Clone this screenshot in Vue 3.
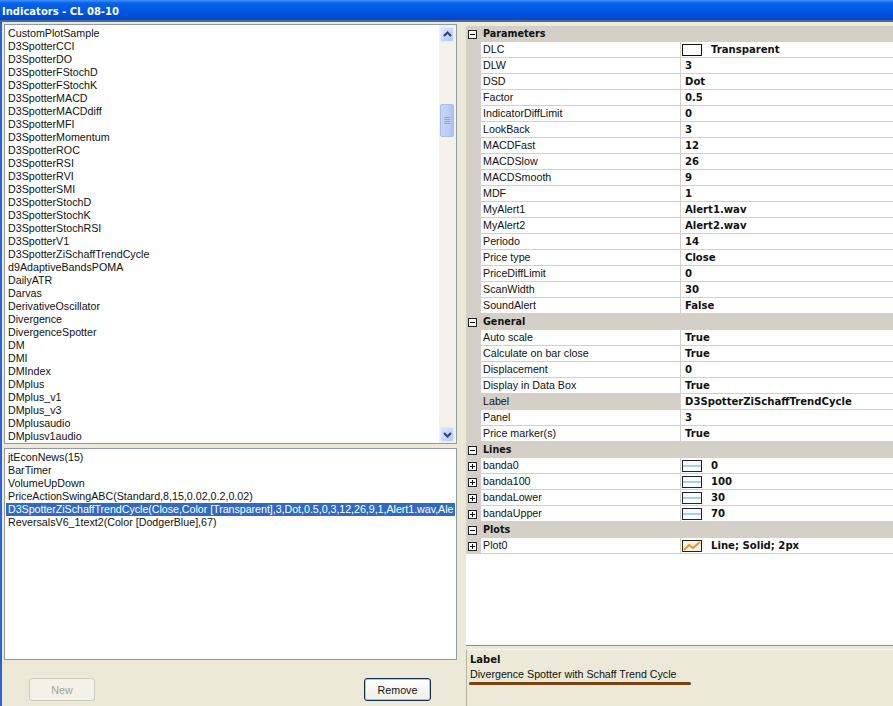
<script setup>
const indicators = [
  'CustomPlotSample', 'D3SpotterCCI', 'D3SpotterDO', 'D3SpotterFStochD', 'D3SpotterFStochK',
  'D3SpotterMACD', 'D3SpotterMACDdiff', 'D3SpotterMFI', 'D3SpotterMomentum', 'D3SpotterROC',
  'D3SpotterRSI', 'D3SpotterRVI', 'D3SpotterSMI', 'D3SpotterStochD', 'D3SpotterStochK',
  'D3SpotterStochRSI', 'D3SpotterV1', 'D3SpotterZiSchaffTrendCycle', 'd9AdaptiveBandsPOMA',
  'DailyATR', 'Darvas', 'DerivativeOscillator', 'Divergence', 'DivergenceSpotter', 'DM', 'DMI',
  'DMIndex', 'DMplus', 'DMplus_v1', 'DMplus_v3', 'DMplusaudio', 'DMplusv1audio',
]

const applied = [
  { text: 'jtEconNews(15)' },
  { text: 'BarTimer' },
  { text: 'VolumeUpDown' },
  { text: 'PriceActionSwingABC(Standard,8,15,0.02,0.2,0.02)' },
  { text: 'D3SpotterZiSchaffTrendCycle(Close,Color [Transparent],3,Dot,0.5,0,3,12,26,9,1,Alert1.wav,Ale', selected: true },
  { text: 'ReversalsV6_1text2(Color [DodgerBlue],67)' },
]

const groups = [
  {
    title: 'Parameters',
    rows: [
      { name: 'DLC', value: 'Transparent', swatch: 'empty' },
      { name: 'DLW', value: '3' },
      { name: 'DSD', value: 'Dot' },
      { name: 'Factor', value: '0.5' },
      { name: 'IndicatorDiffLimit', value: '0' },
      { name: 'LookBack', value: '3' },
      { name: 'MACDFast', value: '12' },
      { name: 'MACDSlow', value: '26' },
      { name: 'MACDSmooth', value: '9' },
      { name: 'MDF', value: '1' },
      { name: 'MyAlert1', value: 'Alert1.wav' },
      { name: 'MyAlert2', value: 'Alert2.wav' },
      { name: 'Periodo', value: '14' },
      { name: 'Price type', value: 'Close' },
      { name: 'PriceDiffLimit', value: '0' },
      { name: 'ScanWidth', value: '30' },
      { name: 'SoundAlert', value: 'False' },
    ],
  },
  {
    title: 'General',
    rows: [
      { name: 'Auto scale', value: 'True' },
      { name: 'Calculate on bar close', value: 'True' },
      { name: 'Displacement', value: '0' },
      { name: 'Display in Data Box', value: 'True' },
      { name: 'Label', value: 'D3SpotterZiSchaffTrendCycle', active: true },
      { name: 'Panel', value: '3' },
      { name: 'Price marker(s)', value: 'True' },
    ],
  },
  {
    title: 'Lines',
    rows: [
      { name: 'banda0', value: '0', swatch: 'line', expand: true },
      { name: 'banda100', value: '100', swatch: 'line', expand: true },
      { name: 'bandaLower', value: '30', swatch: 'line', expand: true },
      { name: 'bandaUpper', value: '70', swatch: 'line', expand: true },
    ],
  },
  {
    title: 'Plots',
    rows: [{ name: 'Plot0', value: 'Line; Solid; 2px', swatch: 'plot', expand: true }],
  },
]
</script>

<template>
  <div class="window">
    <header class="titlebar">Indicators - CL 08-10</header>

    <div class="body">
      <section class="left">
        <div class="listbox listbox--top">
          <ul class="items">
            <li v-for="item in indicators" :key="item">{{ item }}</li>
          </ul>
          <div class="scrollbar">
            <div class="scroll-btn">
              <svg width="9" height="7" viewBox="0 0 9 7"><path d="M1 5 L4.5 1.5 L8 5" fill="none" stroke="#2a3f8c" stroke-width="2" /></svg>
            </div>
            <div class="scroll-track">
              <div class="scroll-thumb">
                <span></span><span></span><span></span><span></span>
              </div>
            </div>
            <div class="scroll-btn">
              <svg width="9" height="7" viewBox="0 0 9 7"><path d="M1 2 L4.5 5.5 L8 2" fill="none" stroke="#2a3f8c" stroke-width="2" /></svg>
            </div>
          </div>
        </div>

        <div class="listbox listbox--applied">
          <ul class="items items--applied">
            <li v-for="item in applied" :key="item.text" :class="{ selected: item.selected }">{{ item.text }}</li>
          </ul>
        </div>

        <div class="actions">
          <button class="btn btn--disabled" disabled>New</button>
          <button class="btn btn--default">Remove</button>
        </div>
      </section>

      <section class="right">
        <div class="grid">
          <template v-for="group in groups" :key="group.title">
            <div class="group-head">
              <span class="gutter">
                <svg class="expander" width="9" height="9" viewBox="0 0 9 9"><rect x=".5" y=".5" width="8" height="8" fill="#fff" stroke="#222" /><path d="M2 4.5 H7" stroke="#111" /></svg>
              </span>
              {{ group.title }}
            </div>
            <div v-for="row in group.rows" :key="row.name" class="row">
              <span class="gutter">
                <svg v-if="row.expand" class="expander" width="9" height="9" viewBox="0 0 9 9"><rect x=".5" y=".5" width="8" height="8" fill="#fff" stroke="#222" /><path d="M2 4.5 H7 M4.5 2 V7" stroke="#111" /></svg>
              </span>
              <span class="name" :class="{ 'name--active': row.active }">{{ row.name }}</span>
              <span class="value">
                <svg v-if="row.swatch" class="swatch" width="20" height="12" viewBox="0 0 20 12">
                  <rect v-if="row.swatch === 'empty'" x=".5" y=".5" width="19" height="11" fill="#fff" stroke="#111" />
                  <template v-if="row.swatch === 'line'">
                    <rect x=".5" y=".5" width="19" height="11" fill="#f6fbfd" stroke="#223" />
                    <path d="M1 6 H19" stroke="#a9cfe0" stroke-width="2" />
                  </template>
                  <template v-if="row.swatch === 'plot'">
                    <rect x=".5" y=".5" width="19" height="11" fill="#f7f3e6" stroke="#222" />
                    <path d="M2 10 L7 5 L11 8 L18 2" fill="none" stroke="#e8962e" stroke-width="2" />
                  </template>
                </svg>
                {{ row.value }}
              </span>
            </div>
          </template>
        </div>

        <div class="help">
          <div class="help__title">Label</div>
          <div class="help__text">Divergence Spotter with Schaff Trend Cycle</div>
          <div class="help__mark"></div>
        </div>
      </section>
    </div>
  </div>
</template>

<style>
html, body {
  margin: 0;
  overflow: hidden;
  background: #ece9d8;
}
</style>

<style scoped>
.window {
  width: 893px;
  height: 706px;
  display: flex;
  flex-direction: column;
  font-family: "Liberation Sans", Arial, sans-serif;
  font-size: 10.7px;
  color: #111;
  overflow: hidden;
  background: #ece9d8;
}
.titlebar {
  height: 20px;
  padding-left: 2px;
  line-height: 23px;
  flex: none;
  font-family: "DejaVu Sans", sans-serif;
  font-size: 10px;
  font-weight: bold;
  color: #fff;
  background: linear-gradient(#3d95ff 0, #0a62ea 3px, #0058e4 10px, #0048cc 100%);
  border-bottom: 2px solid #4d6a90;
}
.body {
  flex: 1;
  min-height: 0;
  display: flex;
  border-left: 2px solid #2a63d8;
}
.left {
  width: 456px;
  padding: 2px 0 0 2px;
  box-sizing: border-box;
  flex: none;
  display: flex;
  flex-direction: column;
}
.listbox {
  display: flex;
  box-sizing: border-box;
  background: #fff;
  border: 1px solid #8d9aa8;
  width: 453px;
}
.listbox--top {
  height: 420px;
}
.listbox--applied {
  height: 212px;
  margin-top: 4px;
}
.items {
  flex: 1;
  min-width: 0;
  margin: 0;
  padding: 2px 1px 0 1px;
  list-style: none;
}
.items li {
  height: 13px;
  line-height: 13px;
  padding-left: 2px;
  white-space: nowrap;
  overflow: hidden;
}
.items--applied li.selected {
  background: #316ac5;
  color: #fff;
  letter-spacing: -0.04px;
}
.scrollbar {
  width: 17px;
  flex: none;
  display: flex;
  flex-direction: column;
  padding: 2px 0 1px;
  box-sizing: border-box;
  background: #f4f2ea;
}
.scroll-btn {
  height: 15px;
  width: 14px;
  margin-left: 1px;
  flex: none;
  display: flex;
  align-items: center;
  justify-content: center;
  box-sizing: border-box;
  border: 1px solid #e4ebfb;
  border-radius: 2px;
  background: linear-gradient(135deg, #dfe8fd, #b4c6f5);
}
.scroll-track {
  flex: 1;
  padding-top: 62px;
}
.scroll-thumb {
  height: 33px;
  width: 14px;
  margin-left: 1px;
  box-sizing: border-box;
  border: 1px solid #a9bdec;
  border-radius: 2px;
  background: linear-gradient(90deg, #c8d6fb, #bccdfa 60%, #aebff0);
  display: flex;
  flex-direction: column;
  align-items: center;
  justify-content: center;
  gap: 1px;
}
.scroll-thumb span {
  width: 6px;
  height: 1px;
  background: #8ea4dc;
}
.actions {
  flex: 1;
  display: flex;
  justify-content: space-between;
  padding: 18px 27px 0 25px;
}
.btn {
  width: 67px;
  height: 23px;
  padding: 0;
  font-family: "Liberation Sans", Arial, sans-serif;
  font-size: 10.7px;
  border-radius: 3px;
}
.btn--disabled {
  width: 66px;
  color: #a5a498;
  background: #f3f1e8;
  border: 1px solid #cfcdbd;
}
.btn--default {
  color: #111;
  background: linear-gradient(#fff, #f0efe6);
  border: 1px solid #0f2f55;
  box-shadow: inset 0 0 0 1px #a9c4ea;
}
.right {
  flex: 1;
  min-width: 0;
  margin-left: 8px;
  padding-top: 4px;
  display: flex;
  flex-direction: column;
}
.grid {
  height: 620px;
  flex: none;
  background: #fff;
  border-bottom: 1px solid #8f8f86;
  box-sizing: border-box;
}
.group-head {
  height: 16px;
  line-height: 16px;
  display: flex;
  align-items: center;
  font-weight: bold;
  background: #d4d0c8;
  font-family: "DejaVu Sans", sans-serif;
  font-size: 9.6px;
}
.row {
  display: grid;
  grid-template-columns: 15px 200px 1fr;
  height: 16px;
  box-sizing: border-box;
  border-bottom: 1px solid #d4d0c8;
}
.gutter {
  width: 15px;
  flex: none;
  align-self: stretch;
  background: #d4d0c8;
  display: flex;
  align-items: center;
  justify-content: flex-start;
  margin-bottom: -1px;
  padding-left: 2px;
  box-sizing: border-box;
}
.group-head .gutter {
  margin-bottom: 0;
  margin-right: 2px;
}
.name {
  padding-left: 2px;
  line-height: 15px;
  border-right: 1px solid #d4d0c8;
  white-space: nowrap;
}
.name--active {
  background: #d4d0c8;
}
.value {
  display: flex;
  align-items: center;
  padding-left: 4px;
  font-family: "DejaVu Sans", sans-serif;
  font-size: 10.1px;
  font-weight: bold;
  white-space: nowrap;
}
.swatch {
  margin: 0 9px 0 -3px;
  flex: none;
}
.help {
  flex: 1;
  margin-top: 3px;
  padding: 3px 0 0 3px;
  border-top: 1px solid #f8f7f0;
  border-left: 1px solid #b5b3a6;
}
.help__title {
  font-family: "DejaVu Sans", sans-serif;
  font-size: 10px;
  font-weight: bold;
  line-height: 13px;
}
.help__text {
  margin-top: 1px;
  line-height: 14px;
}
.help__mark {
  width: 222px;
  height: 3px;
  margin: 1px 0 0 -1px;
  border-radius: 2px;
  background: #7a4310;
}
</style>
